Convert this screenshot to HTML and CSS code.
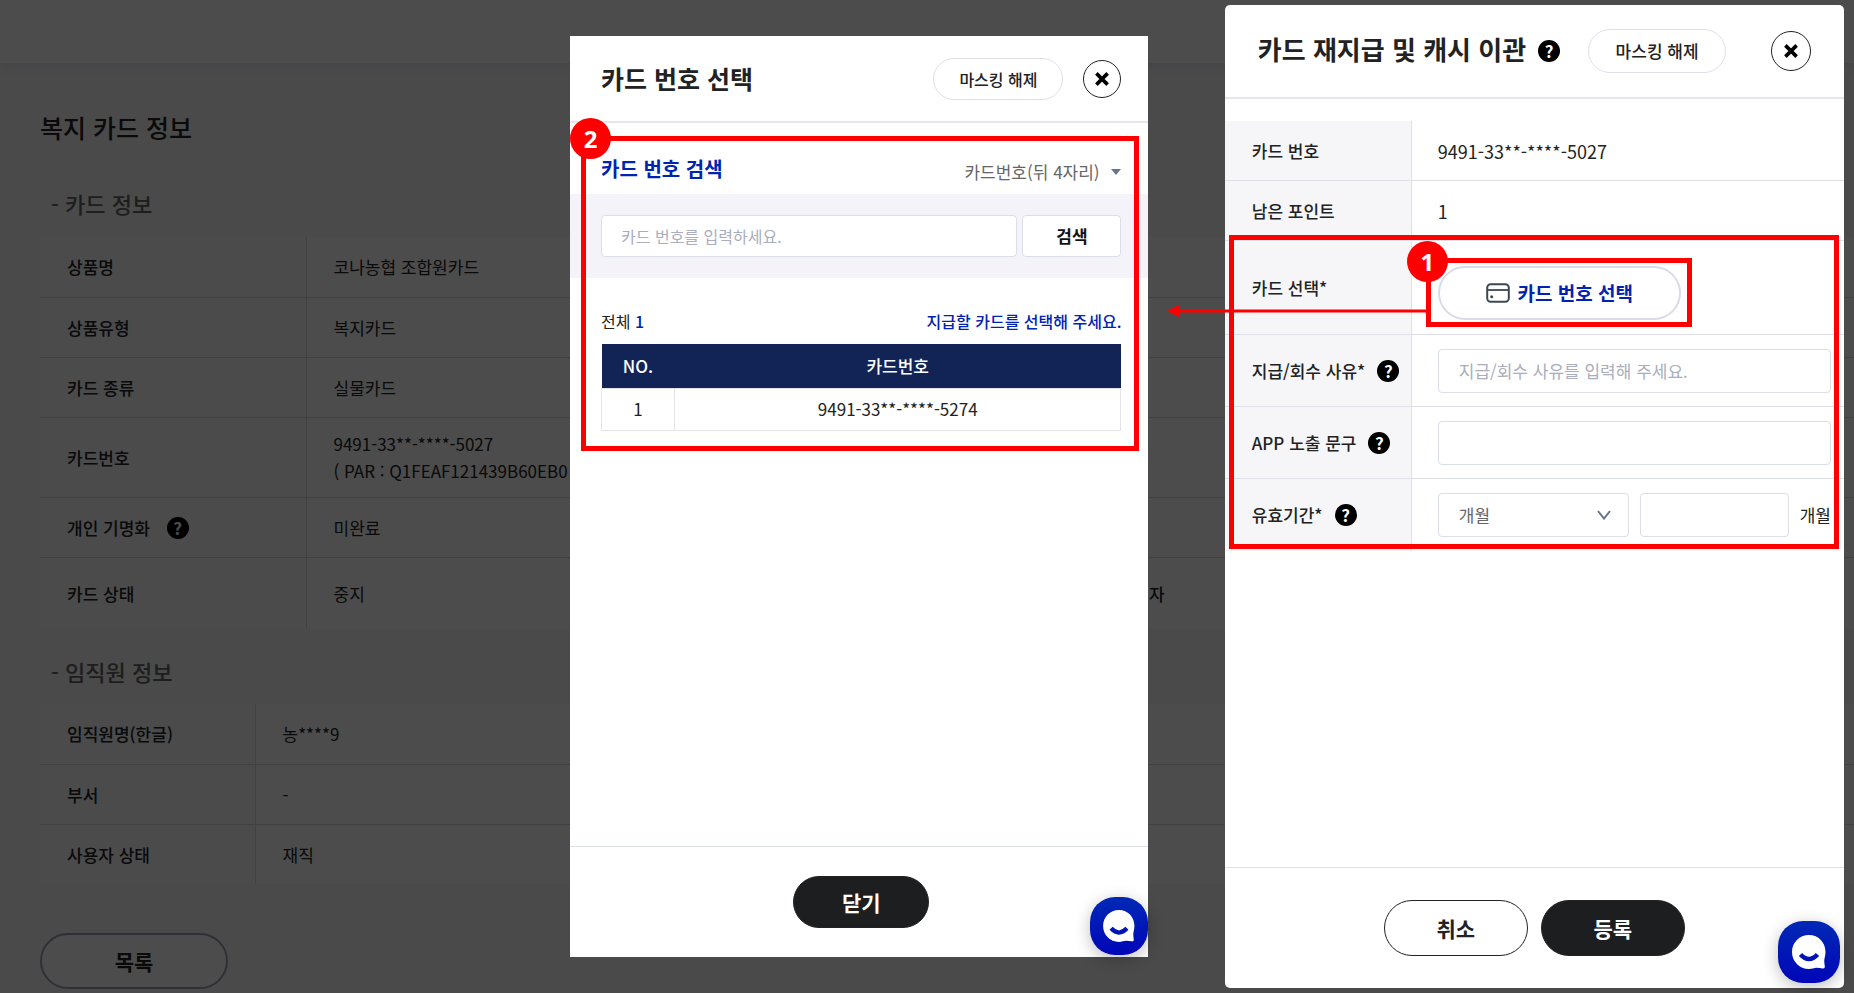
FILE: index.html
```html
<!DOCTYPE html>
<html lang="ko">
<head>
<meta charset="utf-8">
<title>복지 카드 정보</title>
<link rel="stylesheet" href="styles.css">
</head>
<body>
<svg class="defs" aria-hidden="true">
  <symbol id="close" viewBox="0 0 16 16"><path d="M3 3l10 10M13 3L3 13" fill="none" stroke="#000" stroke-width="3.2"/></symbol>
  <symbol id="chat" viewBox="0 0 62 62">
    <path d="M31 14C40.500 14 47.500 21.500 47.500 31C47.500 34 46.500 37 46.300 39C46.100 41.500 46.700 43.500 46.800 45.500C46.900 47 46.200 47.600 44.800 47.400C42.500 47.100 40.500 46.700 38.500 46.700C36 46.700 34 48 31 48C21.500 48 14 40.500 14 31C14 21.500 21.500 14 31 14Z" fill="#fff"/>
    <path d="M22.500 33.500Q31 42.500 39.500 33.500" fill="none" stroke="#0013b6" stroke-width="4.600"/>
  </symbol>
</svg>
<header class="topbar"></header>
<main class="page">
  <h1 class="page-title">복지 카드 정보</h1>
  <h2 class="section-title">- 카드 정보</h2>
  <table class="info info-card">
    <tr><th scope="row">상품명</th><td>코나농협 조합원카드</td><td></td></tr>
    <tr><th scope="row">상품유형</th><td>복지카드</td><td></td></tr>
    <tr><th scope="row">카드 종류</th><td>실물카드</td><td></td></tr>
    <tr class="row-number"><th scope="row">카드번호</th><td>9491-33**-****-5027<br>( PAR : Q1FEAF121439B60EB0</td><td></td></tr>
    <tr><th scope="row">개인 기명화 <button class="help help-first" aria-label="도움말">?</button></th><td>미완료</td><td></td></tr>
    <tr class="row-state"><th scope="row">카드 상태</th><td>중지</td><td>자</td></tr>
  </table>
  <h2 class="section-title">- 임직원 정보</h2>
  <table class="info info-staff">
    <tr><th scope="row">임직원명(한글)</th><td>농****9</td></tr>
    <tr><th scope="row">부서</th><td>-</td></tr>
    <tr><th scope="row">사용자 상태</th><td>재직</td></tr>
  </table>
  <button class="list-btn">목록</button>
</main>
<div class="dim"></div>

<section class="modal picker" role="dialog" aria-labelledby="picker-title">
  <header class="modal-head">
    <h2 class="modal-title" id="picker-title">카드 번호 선택</h2>
    <button class="pill">마스킹 해제</button>
    <button class="close" aria-label="닫기"><svg><use href="#close"/></svg></button>
  </header>
  <div class="picker-body">
    <div class="search-head">
      <label class="search-title" for="card-search">카드 번호 검색</label>
      <span class="kind"><select aria-label="검색 기준"><option>카드번호(뒤 4자리)</option></select><i class="caret"></i></span>
    </div>
    <div class="search-row">
      <input class="field" id="card-search" placeholder="카드 번호를 입력하세요.">
      <button class="search-btn">검색</button>
    </div>
    <div class="result">
      <div class="result-head"><span>전체 <b>1</b></span><span class="notice">지급할 카드를 선택해 주세요.</span></div>
      <table class="cards">
        <thead><tr><th class="col-no">NO.</th><th>카드번호</th></tr></thead>
        <tbody><tr><td>1</td><td>9491-33**-****-5274</td></tr></tbody>
      </table>
    </div>
    <div class="mark mark-two"><span class="badge">2</span></div>
  </div>
  <footer class="modal-foot"><button class="btn dark">닫기</button></footer>
  <button class="chat" aria-label="채팅 상담"><svg><use href="#chat"/></svg></button>
</section>

<section class="modal transfer" role="dialog" aria-labelledby="transfer-title">
  <header class="modal-head">
    <h2 class="modal-title" id="transfer-title">카드 재지급 및 캐시 이관</h2>
    <button class="help" aria-label="도움말">?</button>
    <button class="pill">마스킹 해제</button>
    <button class="close" aria-label="닫기"><svg><use href="#close"/></svg></button>
  </header>
  <div class="form">
    <div class="row"><span class="label">카드 번호</span><div class="value">9491-33**-****-5027</div></div>
    <div class="row"><span class="label">남은 포인트</span><div class="value">1</div></div>
    <div class="marked">
      <div class="row row-pick"><span class="label">카드 선택*</span>
        <div class="value">
          <div class="pick-wrap">
            <button class="pick"><svg class="card-icon" viewBox="0 0 24 20"><rect x="1.200" y="1.200" width="21.600" height="17.600" rx="3.500" fill="none" stroke="#3b4755" stroke-width="2"/><path d="M1.200 7H22.800" stroke="#3b4755" stroke-width="1.800"/><circle cx="5.700" cy="13.700" r="1.500" fill="#3b4755"/></svg>카드 번호 선택</button>
            <div class="mark mark-one"><span class="badge">1</span><svg class="arrow" viewBox="0 0 264 14"><path d="M0 7L13 .5V5.500H264V8.500H13V13.500Z" fill="#f00"/></svg></div>
          </div>
        </div>
      </div>
      <div class="row row-input"><span class="label"><label for="reason">지급/회수 사유*</label><button class="help" aria-label="도움말">?</button></span><div class="value"><input class="field" id="reason" placeholder="지급/회수 사유를 입력해 주세요."></div></div>
      <div class="row row-input"><span class="label"><label for="phrase">APP 노출 문구</label><button class="help" aria-label="도움말">?</button></span><div class="value"><input class="field" id="phrase"></div></div>
      <div class="row row-input row-last"><span class="label"><label for="unit">유효기간*</label><button class="help" aria-label="도움말">?</button></span>
        <div class="value term">
          <span class="unit"><select class="field" id="unit"><option>개월</option></select><svg class="chevron" viewBox="0 0 14 10"><path d="M1 1l6 7.500L13 1" fill="none" stroke="#64748b" stroke-width="2"/></svg></span>
          <input class="field" id="months"><label for="months">개월</label>
        </div>
      </div>
      <div class="mark mark-form"></div>
    </div>
  </div>
  <footer class="modal-foot"><button class="btn">취소</button><button class="btn dark">등록</button></footer>
  <button class="chat" aria-label="채팅 상담"><svg><use href="#chat"/></svg></button>
</section>
</body>
</html>
```
FILE: styles.css
```css
* { box-sizing: border-box; }
html, body { height: 100%; }
body { margin: 0; position: relative; overflow: hidden; background: #f7f7f9; color: #222; font: 17px/26px "Noto Sans CJK KR", sans-serif; }
button, input, select { font: inherit; color: inherit; margin: 0; }
button { padding: 0; border: 0; background: none; }
h1, h2 { margin: 0; }
table { border-collapse: collapse; }
.defs { display: none; }

.topbar { height: 63px; background: #fff; box-shadow: 0 2px 12px #dfe1ec; }
.page { padding: 45px 0 0 40px; }
.page-title { font-size: 25px; line-height: 38px; font-weight: 500; }
.section-title { padding-left: 11px; margin: 41px 0 18px; font-size: 22px; line-height: 32px; font-weight: 500; color: #666; }
.info { width: 100%; background: #fff; font-size: 17px; line-height: 27px; }
.info tr { height: 60px; }
.info tr + tr { border-top: 1px solid #dadae2; }
.info th { padding: 0 27px; text-align: left; font-weight: 500; background: #fafafb; border-right: 1px solid #dadae2; }
.info td { padding: 0 27px; white-space: nowrap; }
.info-card { table-layout: fixed; }
.info-card th { width: 266px; }
.info-card td:last-child { width: 732px; font-weight: 500; }
.info-staff th { width: 215px; }
.info .row-number { height: 80px; }
.info .row-state { height: 72px; }
.info-card + .section-title { margin: 26px 0 17px; }
.help { flex: none; width: 22px; height: 22px; border-radius: 50%; background: #000; color: #fff; font-size: 17px; line-height: 22px; font-weight: 700; text-align: center; }
.help-first { margin-left: 12px; }
.list-btn { display: block; width: 188px; height: 56px; margin-top: 49px; border: 2px solid #9fa1b5; border-radius: 28px; font-size: 21px; font-weight: 700; background: #fff; }
.dim { position: absolute; inset: 0; background: rgba(0, 0, 0, .7); }

.modal { position: absolute; display: flex; flex-direction: column; background: #fff; }
.picker { top: 36px; bottom: 36px; left: 570px; width: 31.200%; }
.transfer { top: 5px; bottom: 5px; right: 10px; width: 33.400%; border-radius: 5px; }
.modal-head { display: flex; align-items: center; border-bottom: 2px solid #e4e6ee; }
.picker .modal-head { height: 87px; padding: 0 27px 0 31px; }
.transfer .modal-head { height: 94px; padding: 0 33px; }
.modal-title { padding-bottom: 2px; font-size: 25px; line-height: 36px; font-weight: 700; }
.transfer .modal-title { padding-bottom: 4px; font-size: 26px; }
.pill { height: 42px; width: 130px; border: 1px solid #dfe1ea; border-radius: 21px; font-size: 16px; font-weight: 500; }
.picker .pill { margin-left: auto; }
.close { display: grid; place-items: center; width: 38px; height: 38px; margin-left: 20px; border: 1px solid #222; border-radius: 50%; }
.close svg { width: 18px; height: 18px; }
.transfer .help { margin-left: 12px; }
.transfer .pill { width: 138px; height: 44px; margin-left: 28px; border-radius: 22px; font-size: 17px; }
.transfer .close { width: 40px; height: 40px; margin-left: auto; }
.modal-foot { display: flex; justify-content: center; align-items: center; gap: 13px; margin-top: auto; border-top: 1px solid #dfe1ea; }
.picker .modal-foot { height: 111px; padding-left: 4px; }
.transfer .modal-foot { height: 121px; }
.btn { width: 144px; height: 56px; border: 1px solid #222; border-radius: 28px; font-size: 21px; font-weight: 700; }
.picker .btn { width: 136px; height: 52px; }
.btn.dark { background: #1d1e20; color: #fff; }
.chat { position: absolute; right: 4px; bottom: 5px; width: 62px; height: 62px; border-radius: 25px; background: linear-gradient(#0029b5, #0006b8); box-shadow: 0 4px 16px rgba(0, 0, 0, .25); }
.picker .chat { right: 0; bottom: 2px; width: 58px; height: 58px; }
.chat svg { display: block; width: 100%; height: 100%; }

.field { min-width: 0; height: 44px; padding: 0 20px; border: 1px solid #dcdee9; border-radius: 4px; background: #fff; outline: 0; }
.field::placeholder { color: #a9adbd; opacity: 1; }
.mark { position: absolute; border: 5px solid #f00; pointer-events: none; }
.badge { position: absolute; width: 41px; height: 41px; border-radius: 50%; background: #f00; color: #fff; font: 700 24px/41px "Open Sans", sans-serif; text-align: center; }

.picker-body { position: relative; }
.search-head { display: flex; justify-content: space-between; align-items: center; height: 71px; padding: 22px 27px 0 31px; }
.search-title { padding-bottom: 2px; font-size: 20px; font-weight: 700; color: #0023b0; }
.kind { display: flex; align-items: center; gap: 12px; padding-top: 4px; color: #666; }
.kind select { appearance: none; border: 0; padding: 0; background: none; }
.caret { border: 5px solid transparent; border-top: 6px solid #64748b; border-bottom: 0; }
.search-row { display: flex; gap: 5px; padding: 21px 27px 21px 31px; background: #f4f3f9; }
.search-row .field { flex: 1; height: 42px; padding: 0 19px; font-size: 16px; }
.search-btn { width: 99px; border: 1px solid #dcdee9; border-radius: 4px; background: #fff; font-weight: 700; color: #111; }
.result { padding: 30px 27px 0 31px; }
.result-head { display: flex; justify-content: space-between; margin-bottom: 10px; font-size: 16px; }
.result-head b { font-weight: 500; }
.result-head b, .notice { color: #0023b0; }
.notice { font-weight: 500; }
.cards { width: 100%; text-align: center; }
.cards th { height: 44px; padding: 0; font-weight: 500; color: #fff; background: #122456; }
.cards td { height: 42px; padding: 0; border: 1px solid #e4e4e6; }
.cards .col-no { width: 73px; }
.mark-two { top: 13px; right: 9px; bottom: -20px; left: 11px; }
.mark-two .badge { top: -23px; left: -16px; }

.form { padding-top: 22px; }
.row { display: flex; height: 60px; border-bottom: 1px solid #dfe0ea; }
.row > .value { font-size: 18px; }
.label { flex: none; display: flex; align-items: center; width: 187px; padding-left: 27px; background: #f6f6f9; border-right: 1px solid #dfe0ea; font-weight: 500; }
.value { flex: 1; display: flex; align-items: center; min-width: 0; padding: 0 13px 0 26px; }
.value > .field { flex: 1; }
.marked { position: relative; }
.row-pick { height: 94px; }
.row.row-input { height: 72px; }
.row-input > .value { font-size: 17px; }
.row-last { border-bottom: 0; }
.pick-wrap { position: relative; margin-top: 10px; }
.pick { display: flex; align-items: center; justify-content: center; gap: 8px; width: 243px; height: 54px; border: 2px solid #d9dbe8; border-radius: 27px; font-size: 19px; font-weight: 700; color: #0023b0; }
.card-icon { width: 24px; height: 20px; }
.mark-one { z-index: 2; inset: -8px -11px -7px -12px; }
.mark-one .badge { top: -22px; left: -24px; }
.arrow { position: absolute; right: 100%; top: 41px; width: 264px; height: 14px; }
.mark-form { top: -6px; right: 5px; bottom: 2px; left: 4px; }
.row > .term { display: grid; grid-template-columns: 190fr 148fr auto; gap: 11px; }
.unit { position: relative; display: flex; min-width: 0; }
.unit .field { flex: 1; appearance: none; color: #666; }
.unit .chevron { position: absolute; right: 18px; top: 17px; width: 14px; height: 10px; }
```
